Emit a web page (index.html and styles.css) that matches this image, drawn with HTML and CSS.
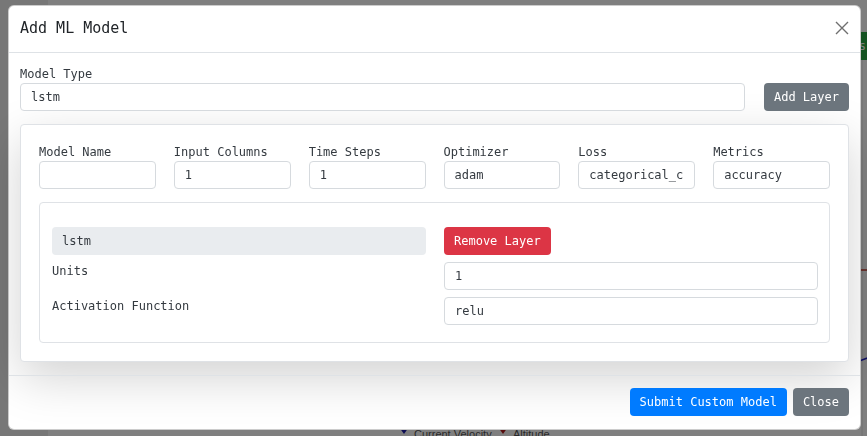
FILE: index.html
```html
<!DOCTYPE html>
<html lang="en">
<head>
<meta charset="utf-8">
<title>Add ML Model</title>
<link rel="stylesheet" href="styles.css">
</head>
<body>
<div class="page">
  <div class="sidebar"></div>
  <div class="main">
    <div class="toolbar"><button class="btn-success">Results</button></div>
    <svg class="chart" width="840" height="376" viewBox="0 0 840 376">
      <line x1="814" y1="0" x2="814" y2="376" stroke="#e0e0e0" stroke-width="1"/>
      <line x1="0" y1="210" x2="840" y2="210" stroke="#c0392b" stroke-width="1.5"/>
      <polyline points="700,320 790,310 814,300 840,290" fill="none" stroke="#2323c8" stroke-width="1.5"/>
      <line x1="348" y1="369" x2="364" y2="369" stroke="#1a1aa8" stroke-width="2"/>
      <path d="M351 367 L361 367 L356 374 Z" fill="#1a1aa8"/>
      <text x="366" y="378" class="legend">Current Velocity</text>
      <line x1="447" y1="369" x2="463" y2="369" stroke="#b01a1a" stroke-width="2"/>
      <path d="M450 367 L460 367 L455 374 Z" fill="#b01a1a"/>
      <text x="465" y="378" class="legend">Altitude</text>
    </svg>
  </div>
</div>

<div class="backdrop">
  <div class="dialog">
    <div class="modal-header">
      <h5 class="modal-title">Add ML Model</h5>
      <button class="close" aria-label="Close">
        <svg width="14" height="14" viewBox="0 0 14 14"><path d="M1 1 L13 13 M13 1 L1 13" stroke="#6f6f6f" stroke-width="1.4" fill="none"/></svg>
      </button>
    </div>
    <div class="modal-body">
      <div class="type-row">
        <div class="field grow">
          <label class="label">Model Type</label>
          <input class="input" type="text" value="lstm">
        </div>
        <button class="btn btn-secondary">Add Layer</button>
      </div>
      <div class="card">
        <div class="params">
          <div class="field"><label class="label">Model Name</label><input class="input" type="text" value=""></div>
          <div class="field"><label class="label">Input Columns</label><input class="input" type="text" value="1"></div>
          <div class="field"><label class="label">Time Steps</label><input class="input" type="text" value="1"></div>
          <div class="field"><label class="label">Optimizer</label><input class="input" type="text" value="adam"></div>
          <div class="field"><label class="label">Loss</label><input class="input" type="text" value="categorical_crossentropy"></div>
          <div class="field"><label class="label">Metrics</label><input class="input" type="text" value="accuracy"></div>
        </div>
        <div class="layer">
          <div class="layer-grid">
            <div class="layer-type">lstm</div>
            <div><button class="btn btn-danger">Remove Layer</button></div>
            <div class="label">Units</div>
            <input class="input" type="text" value="1">
            <div class="label">Activation Function</div>
            <input class="input" type="text" value="relu">
          </div>
        </div>
      </div>
    </div>
    <div class="modal-footer">
      <button class="btn btn-primary">Submit Custom Model</button>
      <button class="btn btn-secondary">Close</button>
    </div>
  </div>
</div>
</body>
</html>
```

FILE: styles.css
```css
* { box-sizing: border-box; }

html, body {
  margin: 0;
  padding: 0;
  overflow: hidden;
}

body {
  background: #eeeeee;
  font-family: "DejaVu Sans Mono", monospace;
  font-size: 12px;
  width: 867px;
  height: 436px;
}

/* background page */
.page {
  display: flex;
  height: 436px;
}
.sidebar {
  width: 48px;
  flex: none;
}
.main {
  width: 840px;
  flex: none;
  background: #ffffff;
  display: flex;
  flex-direction: column;
}
.toolbar {
  height: 60px;
  display: flex;
  justify-content: flex-end;
  align-items: flex-end;
  padding-right: 12px;
}
.btn-success {
  height: 28px;
  border: 0;
  border-radius: 4px;
  background: #28a745;
  color: #fff;
  font-family: "DejaVu Sans Mono", monospace;
  font-size: 12px;
  padding: 0 10px;
}
.chart { display: block; }
.legend {
  font-family: "Liberation Sans", Arial, sans-serif;
  font-size: 11px;
  fill: #555;
}

/* modal */
.backdrop {
  position: fixed;
  inset: 0;
  background: rgba(0, 0, 0, 0.5);
}
.dialog {
  width: 853px;
  margin: 5px 0 0 8px;
  background: #ffffff;
  border: 1px solid rgba(0, 0, 0, 0.2);
  border-radius: 6px;
  color: #212529;
}

.modal-header {
  display: flex;
  align-items: center;
  justify-content: space-between;
  padding: 11px 11px 13px;
  border-bottom: 1px solid #dee2e6;
}
.modal-title {
  margin: 0;
  font-size: 15px;
  font-weight: normal;
  line-height: 22px;
  color: #212529;
}
.close {
  border: 0;
  background: none;
  padding: 0;
  width: 14px;
  height: 14px;
  display: flex;
}

.modal-body {
  padding: 12px 11px 13px;
}

.type-row {
  display: flex;
  align-items: flex-end;
  gap: 19px;
}
.field {
  display: flex;
  flex-direction: column;
  min-width: 0;
}
.grow { flex: 1; }

.label {
  line-height: 18px;
  color: #343a40;
  font-size: 12px;
}

.input {
  height: 28px;
  width: 100%;
  min-width: 0;
  border: 1px solid #d6dade;
  border-radius: 4px;
  padding: 0 10px;
  font-family: "DejaVu Sans Mono", monospace;
  font-size: 12px;
  color: #343a40;
  background: #fff;
}

.btn {
  height: 28px;
  border: 0;
  border-radius: 4px;
  padding: 0 10px;
  font-family: "DejaVu Sans Mono", monospace;
  font-size: 12px;
  color: #ffffff;
  white-space: nowrap;
  flex: none;
}
.btn-secondary { background: #6c757d; }
.btn-danger { background: #dc3545; }
.btn-primary { background: #007bff; }

.card {
  margin-top: 13px;
  border: 1px solid #dfe2e6;
  border-radius: 4px;
  padding: 18px;
  background: #ffffff;
  box-shadow: 0 1rem 3rem rgba(0, 0, 0, 0.175);
}
.params {
  display: grid;
  grid-template-columns: repeat(6, 1fr);
  gap: 18px;
}

.layer {
  margin-top: 13px;
  border: 1px solid #dfe2e6;
  border-radius: 4px;
  padding: 24px 11px 17px 12px;
}
.layer-grid {
  display: grid;
  grid-template-columns: 1fr 1fr;
  column-gap: 18px;
  row-gap: 7px;
}
.layer-type {
  height: 28px;
  line-height: 28px;
  padding: 0 10px;
  background: #e9ecef;
  border-radius: 4px;
  color: #343a40;
}

.modal-footer {
  display: flex;
  justify-content: flex-end;
  gap: 6px;
  padding: 12px 11px 13px;
  border-top: 1px solid #dee2e6;
}
```
